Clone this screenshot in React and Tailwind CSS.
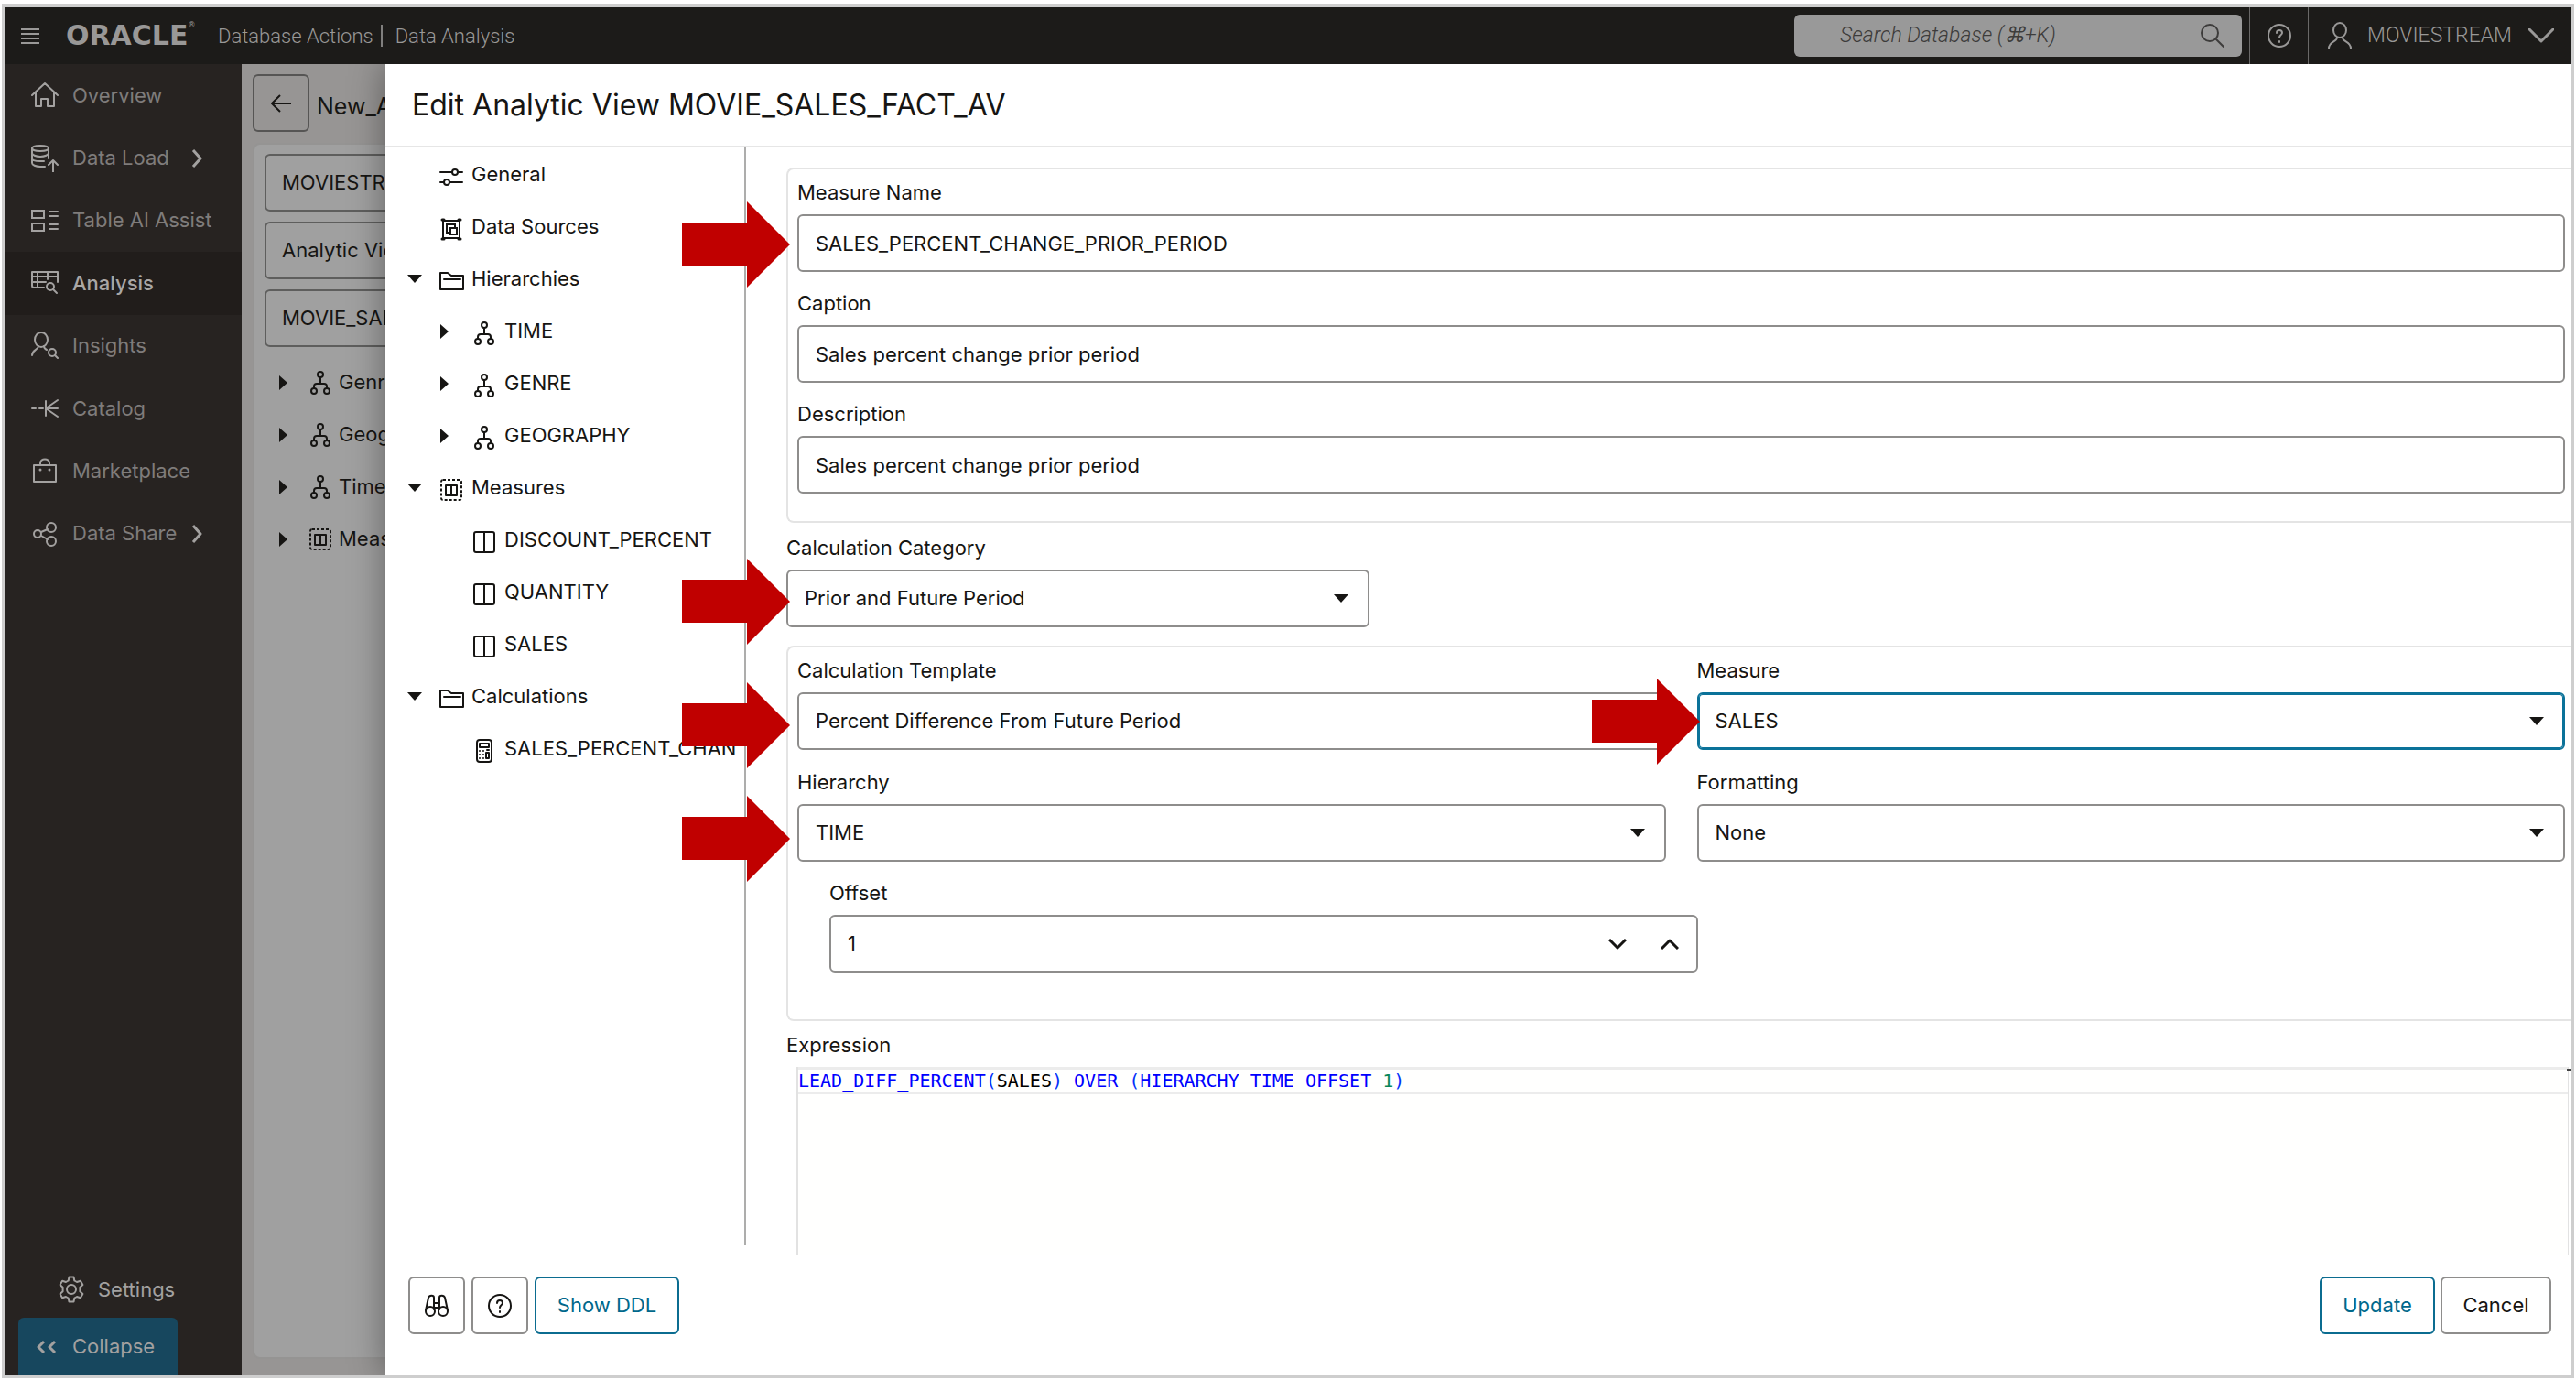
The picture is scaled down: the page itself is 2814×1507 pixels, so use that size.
import React from "react";

/* ---------- icons ---------- */

const line = {
  fill: "none",
  stroke: "currentColor",
  strokeWidth: 2,
  strokeLinecap: "round",
  strokeLinejoin: "round",
  "aria-hidden": true,
};

const HomeIcon = () => (
  <svg {...line} className="h-[30px] w-[30px]" viewBox="0 0 30 30">
    <path d="M1 15 15 2l14 13M5 12v15h6v-8h7v8h7V12" />
  </svg>
);
const DataLoadIcon = () => (
  <svg {...line} className="h-[30px] w-[30px]" viewBox="0 0 30 30">
    <ellipse cx="10" cy="4" rx="9" ry="3" />
    <path d="M1 4v16c0 2 4 4 9 4h5M19 4v11M1 9c0 2 4 4 9 4s9-2 9-4M1 15c0 2 4 3 9 3h4" />
    <path d="M24 30V18M19 22l5-5 5 5" />
  </svg>
);
const TableAssistIcon = () => (
  <svg {...line} strokeLinejoin="miter" className="h-[30px] w-[30px]" viewBox="0 0 30 30">
    <path d="M1 4h13v8H1zM1 18h13v8H1zM20 5h9M20 10h9M20 19h9M20 24h9" />
  </svg>
);
const AnalysisIcon = () => (
  <svg {...line} className="h-[30px] w-[30px]" viewBox="0 0 30 30">
    <path d="M14 20H3a2 2 0 0 1-2-2V3h28v11M1 8h28M1 14h15M7 3v17M18 3v8" />
    <circle cx="21" cy="19" r="4" />
    <path d="m24 22 4 4" />
  </svg>
);
const InsightsIcon = () => (
  <svg {...line} className="h-[30px] w-[30px]" viewBox="0 0 30 30">
    <ellipse cx="11" cy="8" rx="7" ry="8" />
    <path d="M8 15c0 4-7 4-7 10M14 15c0 2 1 3 3 4" />
    <circle cx="23" cy="22" r="4" />
    <path d="m26 25 3 3" />
  </svg>
);
const CatalogIcon = () => (
  <svg {...line} className="h-[30px] w-[30px]" viewBox="0 0 30 30">
    <path d="M1 15h4M9 15h4M16 7v16M16 15h13M16 15 29 6M16 15l13 9" />
  </svg>
);
const MarketIcon = () => (
  <svg {...line} className="h-[30px] w-[30px]" viewBox="0 0 30 30">
    <path d="M3 9h24v18H3zM10 9V7c0-6 10-6 10 0v2" />
    <path d="M10 14v0M20 14v0" strokeWidth="3" />
  </svg>
);
const ShareIcon = () => (
  <svg {...line} className="h-[30px] w-[30px]" viewBox="0 0 30 30">
    <circle cx="7" cy="15" r="4" />
    <circle cx="22" cy="8" r="5" />
    <circle cx="22" cy="23" r="5" />
    <path d="m11 13 7-3M11 17l7 4" />
  </svg>
);
const GearIcon = () => (
  <svg {...line} className="h-[30px] w-[30px]" viewBox="0 0 30 30">
    <circle cx="15" cy="15" r="5" />
    <path d="M12.500 1.500h5l.8 4 2.700 1.500 3.900-1.300 2.500 4.300-3 2.700v4.600l3 2.700-2.500 4.300-3.900-1.300-2.700 1.500-.8 4h-5l-.8-4-2.700-1.500-3.900 1.300-2.500-4.300 3-2.700v-4.600l-3-2.700 2.500-4.300L9 7l2.700-1.500z" />
  </svg>
);
const MenuIcon = () => (
  <svg {...line} strokeLinecap="butt" className="h-[18px] w-5" viewBox="0 0 20 18">
    <path d="M0 2h20M0 7h20M0 12h20M0 17h20" />
  </svg>
);
const ChevronRight = () => (
  <svg {...line} strokeWidth="3" strokeLinecap="butt" className="h-5 w-3" viewBox="0 0 12 20">
    <path d="m2 1 8 9-8 9" />
  </svg>
);
const SearchIcon = () => (
  <svg {...line} className="h-7 w-7" viewBox="0 0 28 28">
    <circle cx="11" cy="11" r="9" />
    <path d="m18 18 8 8" />
  </svg>
);
const HelpIcon = () => (
  <svg {...line} className="h-7 w-7" viewBox="0 0 28 28">
    <circle cx="14" cy="14" r="12" />
    <path d="M11 11c0-4 6-4 6 0 0 2-3 2-3 5M14 20v1" />
  </svg>
);
const UserIcon = () => (
  <svg {...line} className="h-[30px] w-7" viewBox="0 0 28 30">
    <ellipse cx="14" cy="9" rx="7" ry="8" />
    <path d="M11 17c0 5-9 4-9 12M17 17c0 5 9 4 9 12" />
  </svg>
);
const ChevronDown = () => (
  <svg {...line} strokeWidth="3" className="h-4 w-7" viewBox="0 0 28 16">
    <path d="m1 1 13 13L27 1" />
  </svg>
);
const BackIcon = () => (
  <svg {...line} strokeLinecap="butt" className="h-5 w-[22px]" viewBox="0 0 22 20">
    <path d="M22 10H2M10 1l-9 9 9 9" />
  </svg>
);
const SlidersIcon = () => (
  <svg {...line} className="h-[26px] w-[26px]" viewBox="0 0 26 26">
    <path d="M1 8h13M21 8h4M1 19h4M12 19h13" />
    <circle cx="17" cy="8" r="3" />
    <circle cx="8" cy="19" r="3" />
  </svg>
);
const DataSourcesIcon = () => (
  <svg {...line} strokeLinejoin="miter" className="h-[26px] w-[26px]" viewBox="0 0 26 26">
    <path d="M4 4h18v19H4zM17 11V8H8v9h3M12 12h7v7h-7z" />
    <path d="M3 3h2M21 3h2M3 24h2M21 24h2" strokeWidth="3" />
  </svg>
);
const FolderIcon = () => (
  <svg {...line} className="h-[22px] w-[27px]" viewBox="0 0 27 22">
    <path d="M1 20V2h8l4 3h13v15zM5 9h18" />
  </svg>
);
const HierarchyIcon = () => (
  <svg {...line} className="h-[26px] w-[22px]" viewBox="0 0 22 26">
    <circle cx="11" cy="4" r="3" />
    <circle cx="4" cy="22" r="3" />
    <circle cx="18" cy="22" r="3" />
    <path d="M11 7v7M4 19v-2c0-2 1-3 3-3h8c2 0 3 1 3 3v2" />
  </svg>
);
const MeasuresIcon = () => (
  <svg {...line} strokeLinecap="butt" className="h-6 w-6" viewBox="0 0 24 24">
    <rect x="1" y="1" width="22" height="22" rx="2" strokeDasharray="3 2" />
    <path d="M6 7h12v11H6zM12 7v11" />
  </svg>
);
const ColumnIcon = () => (
  <svg {...line} className="h-6 w-6" viewBox="0 0 24 24">
    <rect x="1" y="1" width="22" height="22" rx="2" />
    <path d="M12 1v22" />
  </svg>
);
const CalculatorIcon = () => (
  <svg {...line} className="h-[26px] w-6" viewBox="0 0 24 26">
    <rect x="4" y="1" width="16" height="24" rx="3" />
    <path d="M7 5h10v4H7zM14 15h3v6h-3z" />
    <path d="M7 13v0M11 13v0M15 12h2M7 17v0M11 17v0M7 21v0M11 21v0" />
  </svg>
);
const BinocularsIcon = () => (
  <svg {...line} className="h-[26px] w-7" viewBox="0 0 28 26">
    <circle cx="7" cy="19" r="5" />
    <circle cx="21" cy="19" r="5" />
    <path d="M2 18 5 4c1-3 6-3 6 0v13M26 18 23 4c-1-3-6-3-6 0v13M11 10h6M11 15h6" />
  </svg>
);
const TriangleDown = () => (
  <svg className="h-[9px] w-4" viewBox="0 0 16 9" fill="currentColor" aria-hidden>
    <path d="M0 0h16L8 9z" />
  </svg>
);
const TriangleRight = () => (
  <svg className="h-4 w-[9px]" viewBox="0 0 9 16" fill="currentColor" aria-hidden>
    <path d="M0 0v16l9-8z" />
  </svg>
);
const SpinChevron = ({ up }) => (
  <svg {...line} strokeWidth="3" strokeLinecap="butt" className="h-3 w-5" viewBox="0 0 20 12">
    <path d={up ? "m1 11 9-9 9 9" : "m1 1 9 9 9-9"} />
  </svg>
);

/* Red pointer that calls out a field */
const Pointer = ({ place }) => (
  <svg className={"pointer-events-none absolute z-10 h-[94px] w-[118px] " + place} viewBox="0 0 118 94" fill="#c00000" aria-hidden>
    <path d="M0 23h71V0l47 47-47 47V70H0z" />
  </svg>
);

/* ---------- header and side bar ---------- */

const Header = () => (
  <header className="flex h-[62px] shrink-0 items-center bg-[#1c1b19] font-[Roboto,sans-serif] text-[23px] font-light text-[#999897]">
    <button aria-label="Menu" className="ml-[18px]"><MenuIcon /></button>
    <div className="ml-[29px] flex w-[166px] items-start font-['DejaVu_Sans',sans-serif] text-[30px] font-bold leading-none">
      ORACLE<span className="text-[8px] font-normal">®</span>
    </div>
    <span className="whitespace-nowrap text-[22px]">Database Actions</span>
    <span className="ml-2 h-6 w-0.5 bg-[#807f7e]" />
    <span className="ml-[14px] whitespace-nowrap text-[22px]">Data Analysis</span>
    <div className="ml-auto flex h-[46px] w-[489px] items-center rounded-md bg-[#999] pr-[18px] text-[#3d3c3b]">
      <input aria-label="Search Database" placeholder="Search Database (⌘+K)" className="min-w-0 flex-1 bg-transparent pl-[50px] italic placeholder:text-[#3d3c3b]" />
      <SearchIcon />
    </div>
    <button aria-label="Help" className="ml-2 flex h-full w-[65px] items-center justify-center border-x border-[#6a6968]"><HelpIcon /></button>
    <button className="flex h-full items-center pl-5 pr-[19px]">
      <UserIcon />
      <span className="ml-4 mr-[18px]">MOVIESTREAM</span>
      <ChevronDown />
    </button>
  </header>
);

const navItems = [
  { label: "Overview", icon: HomeIcon },
  { label: "Data Load", icon: DataLoadIcon, more: true },
  { label: "Table AI Assist", icon: TableAssistIcon },
  { label: "Analysis", icon: AnalysisIcon, active: true },
  { label: "Insights", icon: InsightsIcon },
  { label: "Catalog", icon: CatalogIcon },
  { label: "Marketplace", icon: MarketIcon },
  { label: "Data Share", icon: ShareIcon, more: true },
];

const Sidebar = () => (
  <nav className="flex w-[259px] shrink-0 flex-col bg-[#272321] text-[#a3a1a0]">
    <div className="flex h-[547px] flex-col">
      {navItems.map(({ label, icon: Icon, more, active }) => (
        <a key={label} href="#" className={"flex flex-1 items-center pl-[29px] " + (active ? "bg-[#211d1b] font-medium" : "")}>
          <Icon />
          <span className={"ml-[15px] min-w-[130px] whitespace-nowrap " + (active ? "text-[#a9a7a6]" : "text-[#7f7c7b]")}>{label}</span>
          {more && <ChevronRight />}
        </a>
      ))}
    </div>
    <a href="#" className="mt-auto flex h-[62px] items-center pl-[58px]">
      <GearIcon />
      <span className="ml-[14px]">Settings</span>
    </a>
    <button className="ml-[15px] flex h-[63px] w-[174px] items-center rounded-t-md bg-[#17475e] pl-5">
      <svg {...line} strokeWidth="3" strokeLinecap="butt" className="h-[14px] w-[22px]" viewBox="0 0 22 14">
        <path d="M8 1 2 7l6 6M20 1l-6 6 6 6" />
      </svg>
      <span className="ml-[17px]">Collapse</span>
    </button>
  </nav>
);

/* ---------- page behind the dialog ---------- */

const Backdrop = () => (
  <section className="flex w-[157px] shrink-0 flex-col overflow-hidden bg-[#979594] pb-[18px] pl-3 pt-[11px] whitespace-nowrap">
    <div className="flex items-center">
      <button aria-label="Back" className="flex h-[63px] w-[62px] shrink-0 items-center justify-center rounded-md border-2 border-[#565554]"><BackIcon /></button>
      <span className="ml-2 pt-2 text-[25px]">New_Analytic</span>
    </div>
    <div className="mt-3 w-[400px] flex-1 rounded-lg border-2 border-[#959493] bg-[#a0a0a0] pl-[11px] pt-2.5">
      <div className="flex flex-col gap-[11px]">
        {["MOVIESTREAM", "Analytic Views", "MOVIE_SALES_FACT_AV"].map((t) => (
          <button key={t} className="flex h-[63px] items-center rounded-md border-2 border-[#5e5e5d] pl-[17px]">{t}</button>
        ))}
      </div>
      <ul className="mt-[10px]">
        {["Genre", "Geography", "Time", "Measures"].map((t) => (
          <li key={t} className="flex h-[57px] items-center pl-4">
            <TriangleRight />
            <span className="ml-6 mr-2 flex w-6 justify-center">{t === "Measures" ? <MeasuresIcon /> : <HierarchyIcon />}</span>
            {t}
          </li>
        ))}
      </ul>
    </div>
  </section>
);

/* ---------- dialog ---------- */

const tree = [
  { label: "General", icon: SlidersIcon, level: 0 },
  { label: "Data Sources", icon: DataSourcesIcon, level: 0 },
  { label: "Hierarchies", icon: FolderIcon, level: 0, open: true },
  { label: "TIME", icon: HierarchyIcon, level: 1, closed: true },
  { label: "GENRE", icon: HierarchyIcon, level: 1, closed: true },
  { label: "GEOGRAPHY", icon: HierarchyIcon, level: 1, closed: true },
  { label: "Measures", icon: MeasuresIcon, level: 0, open: true },
  { label: "DISCOUNT_PERCENT", icon: ColumnIcon, level: 1 },
  { label: "QUANTITY", icon: ColumnIcon, level: 1 },
  { label: "SALES", icon: ColumnIcon, level: 1 },
  { label: "Calculations", icon: FolderIcon, level: 0, open: true },
  { label: "SALES_PERCENT_CHANGE_PRIOR_PERIOD", icon: CalculatorIcon, level: 1 },
];

const Tree = () => (
  <ul className="mb-[11px] w-[394px] shrink-0 border-r-2 border-[#adadac] pt-px whitespace-nowrap">
    {tree.map(({ label, icon: Icon, level, open, closed }) => (
      <li key={label} className={"flex h-[57px] items-center pr-2 " + (level ? "pl-[60px]" : "pl-6")}>
        <span className="w-4 shrink-0">{open && <TriangleDown />}{closed && <TriangleRight />}</span>
        <span className="ml-[18px] flex w-7 shrink-0 justify-center pt-1">
          <Icon />
        </span>
        <span className="ml-2 overflow-hidden">{label}</span>
      </li>
    ))}
  </ul>
);

const box = "h-[63px] w-full rounded-md border-2 bg-white pl-[18px] ";

const Field = ({ id, label, className = "", children }) => (
  <div className={"relative " + className}>
    <label htmlFor={id} className="mb-2.5 block h-7 leading-7">{label}</label>
    {children}
  </div>
);
const TextField = ({ id, label, value, children }) => (
  <Field id={id} label={label}>
    <input id={id} defaultValue={value} className={box + "border-[#8e8d8c]"} />
    {children}
  </Field>
);
const SelectField = ({ id, label, value, focused, className, children }) => (
  <Field id={id} label={label} className={className}>
    <div className="relative">
      <select id={id} className={box + "appearance-none " + (focused ? "border-[#0b7299] ring-1 ring-inset ring-[#0b7299]" : "border-[#8e8d8c]")}>
        <option>{value}</option>
      </select>
      <span className="pointer-events-none absolute inset-y-0 right-[23px] flex items-center"><TriangleDown /></span>
    </div>
    {children}
  </Field>
);

const group = "flex flex-col rounded-l-lg border-y-2 border-l-2 border-[#e4e4e4] pl-2.5 pr-[7px] pt-[11px] ";

const Form = () => (
  <form className="flex min-w-0 flex-1 flex-col pl-11 pt-[22px]">
    <div className={group + "gap-5 pb-[30px]"}>
      <TextField id="name" label="Measure Name" value="SALES_PERCENT_CHANGE_PRIOR_PERIOD">
        <Pointer place="-left-[126px] top-[24px]" />
      </TextField>
      <TextField id="caption" label="Caption" value="Sales percent change prior period" />
      <TextField id="description" label="Description" value="Sales percent change prior period" />
    </div>
    <SelectField id="category" label="Calculation Category" value="Prior and Future Period" className="mb-5 mt-[13px] w-[637px]">
      <Pointer place="-left-[114px] top-[26px]" />
    </SelectField>
    <div className={group + "gap-5 pb-[51px]"}>
      <div className="grid grid-cols-2 gap-x-[34px] gap-y-[21px]">
        <SelectField id="template" label="Calculation Template" value="Percent Difference From Future Period">
          <Pointer place="-left-[126px] top-[27px]" />
        </SelectField>
        <SelectField id="measure" label="Measure" value="SALES" focused>
          <Pointer place="-left-[115px] top-[23px]" />
        </SelectField>
        <SelectField id="hierarchy" label="Hierarchy" value="TIME">
          <Pointer place="-left-[126px] top-[29px]" />
        </SelectField>
        <SelectField id="format" label="Formatting" value="None" />
      </div>
      <div className="-mr-[35px] grid grid-cols-2 gap-x-[34px] pl-[35px]">
        <Field id="offset" label="Offset">
          <div className={box + "flex items-center border-[#8e8d8c] pr-[19px]"}>
            <input id="offset" defaultValue="1" inputMode="numeric" className="min-w-0 flex-1 outline-none" />
            <button type="button" aria-label="Decrease offset"><SpinChevron /></button>
            <button type="button" aria-label="Increase offset" className="ml-[37px]"><SpinChevron up /></button>
          </div>
        </Field>
      </div>
    </div>
    <div className="mb-2.5 mt-3 h-7 leading-7">Expression</div>
    <div className="relative ml-[11px] mr-[3px] flex-1 border-l-2 border-r border-[#e2e2e2] bg-[#fffffe] font-['DejaVu_Sans_Mono',monospace] text-[20px]">
      <pre className="h-[30px] border-y-[3px] border-[#ececec] font-[inherit] leading-6 text-[#0000ff]">
        LEAD_DIFF_PERCENT<span className="text-[#0431fa]">(</span><span className="text-black">SALES</span><span className="text-[#0431fa]">)</span> OVER <span className="text-[#0431fa]">(</span>HIERARCHY TIME OFFSET <span className="text-[#098658]">1</span><span className="text-[#0431fa]">)</span>
      </pre>
      <span className="absolute -right-[3px] top-0.5 h-[3px] w-1 bg-[#424242]" />
    </div>
  </form>
);

const button = "flex h-[63px] items-center justify-center rounded-md border-2 bg-white ";

const Dialog = () => (
  <section role="dialog" aria-label="Edit Analytic View" className="relative flex min-w-0 flex-1 flex-col bg-white shadow-[0_0_36px_rgba(0,0,0,0.4)]">
    <h1 className="flex h-[91px] shrink-0 items-center border-b-2 border-[#e6e6e6] pl-[29px] text-[32px]">Edit Analytic View MOVIE_SALES_FACT_AV</h1>
    <div className="flex flex-1">
      <Tree />
      <Form />
    </div>
    <footer className="flex h-[131px] shrink-0 items-start pl-[25px] pr-[22px] pt-[23px]">
      <button aria-label="Find" className={button + "w-[62px] border-[#8e8d8c]"}><BinocularsIcon /></button>
      <button aria-label="Help" className={button + "ml-[7px] w-[62px] border-[#8e8d8c]"}><HelpIcon /></button>
      <button className={button + "ml-[7px] w-[158px] border-[#0b6c90] text-[#00688c]"}>Show DDL</button>
      <button className={button + "ml-auto w-[126px] border-[#0b6c90] text-[#00688c]"}>Update</button>
      <button className={button + "ml-[6px] w-[121px] border-[#8e8d8c]"}>Cancel</button>
    </footer>
  </section>
);

export default function App() {
  return (
    <div className="flex h-screen flex-col bg-white pb-0.5 pl-0.5 pr-0.5 pt-1 font-[Inter,sans-serif] text-[22px] text-[#161513]">
      <div className="flex min-h-0 flex-1 flex-col border-[3px] border-t-4 border-[#cecece]">
        <Header />
        <div className="flex min-h-0 flex-1 overflow-hidden">
          <Sidebar />
          <Backdrop />
          <Dialog />
        </div>
      </div>
    </div>
  );
}
